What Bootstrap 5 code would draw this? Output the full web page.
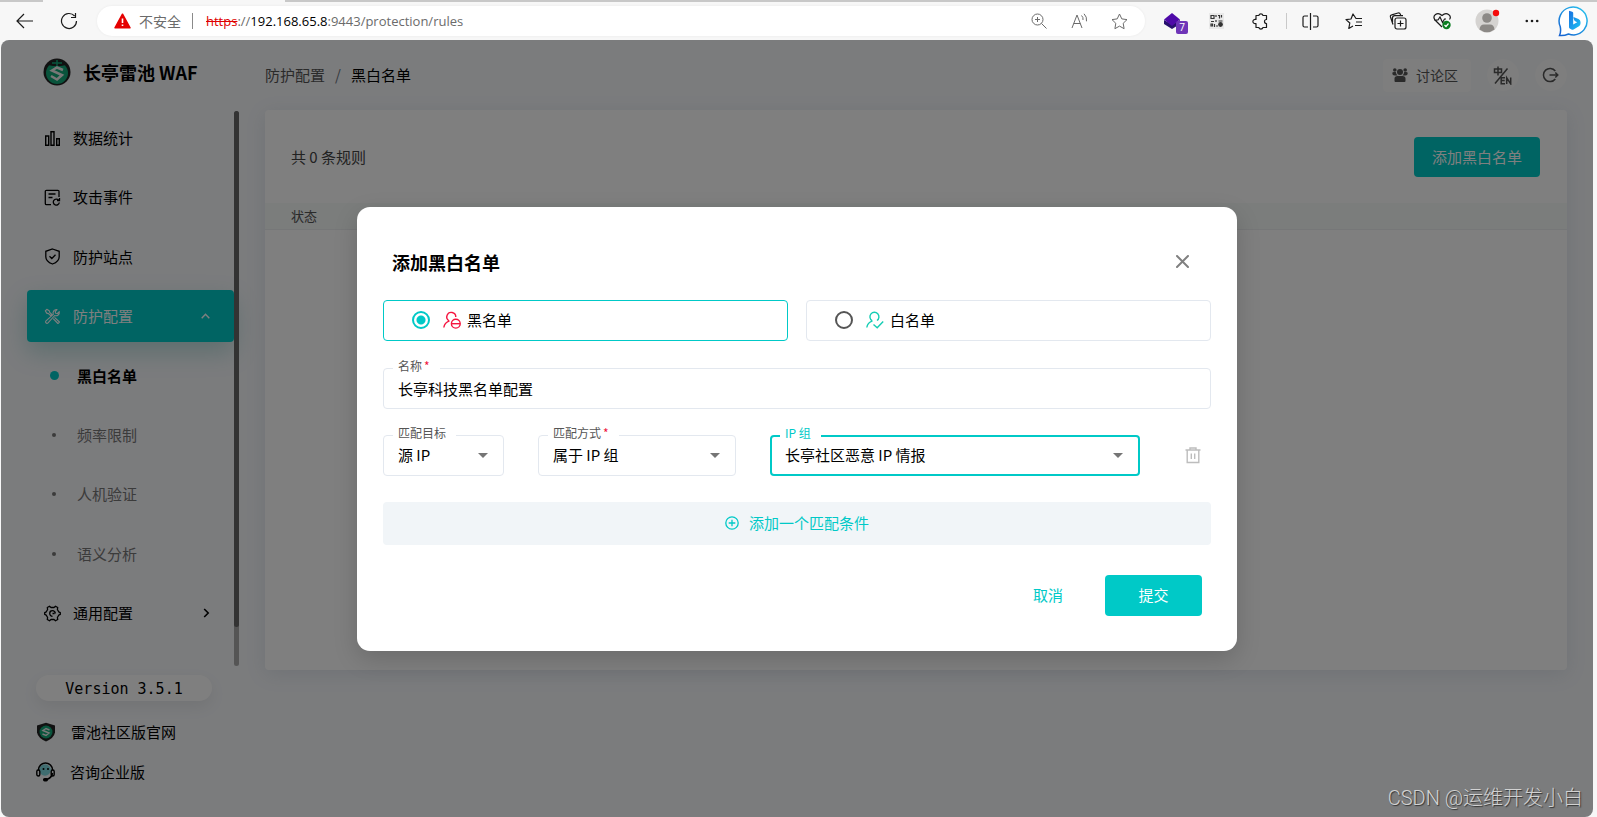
<!DOCTYPE html>
<html lang="zh-CN">
<head>
<meta charset="utf-8">
<meta name="viewport" content="width=device-width, initial-scale=1">
<title>长亭雷池 WAF</title>
<link href="https://cdn.jsdelivr.net/npm/bootstrap@5.3.0/dist/css/bootstrap.min.css" rel="stylesheet">
<style>
  :root { --teal: #00c9c7; --line: #e3e8ef; }
  body { font-family: "Noto Sans CJK SC", sans-serif; font-size: 15px; line-height: 24px; color: #000; background: #f7f7f7; min-height: 100vh; }
  svg { display: block; flex: none; }
  button { font-family: inherit; }
  .plain { border: 0; background: none; padding: 0; color: inherit; display: flex; align-items: center; justify-content: center; }
  a { color: inherit; text-decoration: none; }

  /* browser toolbar */
  .tabstrip { height: 2px; background: linear-gradient(90deg, #c8c8c8 43px, #f7f7f7 43px 285px, #c8c8c8 285px); }
  .toolbar { height: 38px; padding: 0 1px 0 3px; color: #1b1b1b; }
  .toolbar .plain { width: 44px; height: 30px; position: relative; }
  .address { height: 30px; border-radius: 15px; background: #fff; margin: 0 7px 0 6px; padding: 0 6px 0 17px; font-size: 14px; color: #6b6b6b; box-shadow: 0 0 3px rgba(0,0,0,.06); }
  .address .plain { width: 40px; color: #6b6b6b; }
  .url { font-family: "Open Sans", "Noto Sans CJK SC", sans-serif; font-size: 13px; outline: 0; }
  .url s { color: #e00000; }
  .url b { font-weight: 400; color: #000; }
  .bar-sep { width: 1px; height: 16px; background: #8a8a8a; }
  .address .bar-sep { margin: 0 13px 0 11px; }
  .group-sep { width: 4px; }
  .group-sep .bar-sep { background: #c9c9c9; margin: 0 auto; }
  .ext-count { position: absolute; left: 24px; top: 15px; width: 12px; height: 13px; border-radius: 2px; background: #6f35b8; color: #fff; font: 10px/13px "Open Sans", sans-serif; }

  /* page frame */
  .frame { position: relative; margin: 0 4px 0 1px; border-radius: 8px; overflow: hidden; background: #f6f8fb; }
  .side { width: 238px; padding-left: 26px; flex: none; }
  .brand { height: 71px; padding: 0 0 8px 16px; gap: 12px; font-size: 18px; font-weight: 700; }
  .menu { width: 207px; padding: 1px 0 27px; }
  .menu a { height: 52px; padding: 0 24px 0 17px; border-radius: 4px; gap: 12px; }
  .menu a.active { background: var(--teal); color: #fff; box-shadow: 0 10px 25px rgba(0,140,130,.25); }
  .menu a.sub { color: #777; gap: 13px; }
  .menu a.sub i { width: 20px; display: flex; justify-content: center; }
  .menu a.sub i::before { content: ""; width: 4px; height: 4px; border-radius: 50%; background: #777; }
  .menu a.sub.current { color: #000; font-weight: 700; }
  .menu a.sub.current i::before { width: 9px; height: 9px; background: var(--teal); }
  .track { width: 5px; border-radius: 3px; background: #aaa; }
  .track div { height: 93%; border-radius: 3px; background: #666; }
  .side-foot { padding: 9px 0 25px 9px; }
  .version { width: 176px; height: 26px; border-radius: 13px; background: #fff; margin-bottom: 11px; font: 15px/28px "DejaVu Sans Mono", monospace; text-align: center; box-shadow: 0 6px 16px rgba(0,0,0,.07); }
  .side-foot a { height: 40px; gap: 15px; }

  .content { padding: 0 26px; min-width: 0; }
  .topbar { height: 70px; }
  .crumbs { gap: 10px; color: #555; margin: 0; }
  .forum.plain, .round.plain { background: #fcfcfc; color: #555; }
  .forum.plain { height: 33px; width: 88px; border-radius: 4px; gap: 8px; font-size: 14px; padding-right: 4px; }
  .round.plain { width: 32px; height: 32px; border-radius: 50%; padding-right: 2px; }
  .panel { background: #fff; border-radius: 4px; height: calc(100vh - 257px); min-height: 500px; box-shadow: 0 4px 20px rgba(80,100,130,.13); }
  .panel-head { height: 93px; padding: 0 27px 0 26px; color: #444; }
  .btn-teal { background: var(--teal); color: #fff; border-radius: 4px; border: 0; font-size: 15px; line-height: 24px; padding: 8px 18px; }
  .btn-teal:hover { background: #00b5b3; color: #fff; }
  .rules { width: 100%; font-size: 13px; line-height: 20px; }
  .rules th { height: 26px; padding: 0 26px; background: #f6faf8; color: #555; font-weight: 400; border-bottom: 1px solid #eceff1; }

  /* dialog */
  .shade { position: absolute; inset: 0; background: rgba(0,0,0,.5); }
  .dialog { width: 880px; border-radius: 13px; background: #fff; padding: 33px 26px 35px; box-shadow: 0 8px 24px rgba(0,0,0,.16); }
  .dialog-head { height: 44px; padding: 0 22px 0 9px; margin-bottom: 16px; }
  .dialog-head h2 { font-size: 18px; line-height: 28px; font-weight: 700; margin: 0; }
  .choice { flex: 1; height: 41px; border: 1px solid var(--line); border-radius: 4px; padding-left: 28px; }
  .choice.on { border-color: var(--teal); }
  .choice input { appearance: none; width: 18px; height: 18px; margin: 0 13px 0 0; border: 2px solid #555; border-radius: 50%; }
  .choice input:checked { border-color: var(--teal); background: radial-gradient(circle, var(--teal) 4px, #fff 5px); }
  .choice svg { margin-right: 6px; }
  .field { position: relative; }
  .field label { position: absolute; left: 10px; top: -10px; padding: 0 10px 0 5px; background: #fff; font-size: 12px; line-height: 16px; color: #555; white-space: nowrap; }
  .field label span { color: #f0143c; padding-left: 2px; }
  .field input, .field select { width: 100%; height: 41px; border: 1px solid var(--line); border-radius: 4px; padding: 0 14px; background-color: #fff; color: #000; outline: 0; font: inherit; }
  .field select { appearance: none; background-image: url("data:image/svg+xml,%3Csvg xmlns='http://www.w3.org/2000/svg' width='10' height='5'%3E%3Cpath d='M0 0h10L5 5z' fill='%23757575'/%3E%3C/svg%3E"); background-repeat: no-repeat; background-position: right 15px center; }
  .field.focus select { border: 2px solid var(--teal); padding: 0 13px; }
  .field.focus label { color: var(--teal); }
  .w-target { width: 121px; } .w-method { width: 198px; } .w-group { width: 370px; }
  .gap-row { column-gap: 34px; }
  .add { width: 100%; height: 43px; border-radius: 4px; gap: 10px; }
  .add.plain { background: #f1f5f8; color: var(--teal); }
  .cancel.plain { color: var(--teal); padding: 0 4px; }
  .submit { width: 97px; height: 41px; }
  .actions { gap: 38px; padding-right: 9px; }
  .mt-a { margin-top: 27px; } .mt-b { margin-top: 26px; } .mt-c { margin-top: 30px; }
  .mark-text { position: absolute; right: 10px; bottom: 4px; font: 300 20px/30px "Liberation Sans Narrow", Roboto, "Noto Sans CJK SC", sans-serif; color: #d2d2d2; text-shadow: 1px 1px 1px #333; }
</style>
</head>
<body class="d-flex flex-column">

<div class="tabstrip"></div>
<header class="toolbar d-flex align-items-center">
  <button class="plain" aria-label="后退"><svg width="18" height="16" viewBox="0 0 18 16" fill="none" stroke="currentColor" stroke-width="1.200"><path d="M17 8H1M8 1 1 8l7 7"/></svg></button>
  <button class="plain" aria-label="刷新"><svg width="18" height="18" viewBox="0 0 18 18" fill="none" stroke="currentColor" stroke-width="1.200"><path d="M16.500 9A7.500 7.500 0 1 1 14.600 4M15.500 1v4.500H11"/></svg></button>
  <div class="address flex-fill d-flex align-items-center">
    <svg width="17" height="16" viewBox="0 0 17 16"><path d="M8.500 1.200 16 14.800H1z" fill="#e50000" stroke="#e50000" stroke-width="1.500" stroke-linejoin="round"/><path d="M8.500 5.500v4.500M8.500 11.500v1.500" stroke="#fff" stroke-width="1.600"/></svg>
    <span class="ps-2">不安全</span>
    <span class="bar-sep"></span>
    <div class="url flex-fill" role="textbox" aria-label="地址"><s>https</s>://<b>192.168.65.8</b>:9443/protection/rules</div>
    <button class="plain" aria-label="缩放"><svg width="16" height="16" viewBox="0 0 16 16" fill="none" stroke="currentColor"><circle cx="6.500" cy="6.500" r="5.500"/><path d="m10.500 10.500 5 5M6.500 4v5M4 6.500h5"/></svg></button>
    <button class="plain" aria-label="朗读"><svg width="17" height="16" viewBox="0 0 17 16" fill="none" stroke="currentColor"><path d="M1 15 6 2l5 13M2.700 10.500h6.600M10.500 2.500q2 1.800 1.500 4.500M13 .8q3.200 3 2.500 7.500"/></svg></button>
    <button class="plain" aria-label="收藏"><svg width="17" height="17" viewBox="0 0 17 17" fill="none" stroke="currentColor" stroke-linejoin="round"><path d="m8.500 1 2.300 4.900 5.200.7-3.800 3.700.9 5.400-4.600-2.600-4.600 2.600.9-5.400L1 6.600l5.200-.7z"/></svg></button>
  </div>
  <button class="plain pe-1" aria-label="扩展 7"><svg width="18" height="18" viewBox="0 0 18 18"><path d="m1 8 8 4.500L17 8v4l-8 5-8-5z" fill="#27106e"/><path d="m9 1 8 6.500L9 14 1 7.500z" fill="#4e0aa8"/></svg><span class="ext-count">7</span></button>
  <button class="plain pe-1" aria-label="二维码"><svg width="15" height="16" viewBox="0 0 15 16"><path fill="#e9e9e9" d="M0 0h15v16H0z"/><path d="M2 2.500h3v3H2zM9 2.500h1.500v3M12.500 2v2.500M7 2v2M2 8.500h3M7 7v2M9.500 8h4M2 11h1.500v2H2zM5.500 11v3M7 13h2" fill="none" stroke="#333" stroke-width="1.200"/><circle cx="11.500" cy="11.500" r="2.400" fill="#333"/></svg></button>
  <button class="plain pe-1" aria-label="扩展"><svg width="17" height="17" viewBox="0 0 17 17" fill="none" stroke="currentColor" stroke-width="1.200" stroke-linejoin="round"><path d="M4 2.500h2.800a2.200 2.200 0 0 1 4.200 0h3.500V6.500a2 2 0 1 0 0 4V14.500H11a2.200 2.200 0 0 1-4.200 0H4v-4a2.200 2.200 0 1 1 0-4z"/></svg></button>
  <div class="group-sep"><div class="bar-sep"></div></div>
  <button class="plain" aria-label="分屏"><svg width="17" height="17" viewBox="0 0 17 17" fill="none" stroke="currentColor" stroke-width="1.200"><path d="M8.500 0v17M6 3H2.500Q1 3 1 4.500v8Q1 14 2.500 14H6M11 3h3.500Q16 3 16 4.500v8q0 1.500-1.500 1.500H11"/></svg></button>
  <button class="plain" aria-label="收藏夹"><svg width="18" height="17" viewBox="0 0 18 17" fill="none" stroke="currentColor" stroke-width="1.200" stroke-linejoin="round"><path d="M17 5.500h-6L8 1 6 6l-5 .6L4.800 10l-1 5.500L8 13M11 9h6M10 12.500h7"/></svg></button>
  <button class="plain" aria-label="集锦"><svg width="18" height="18" viewBox="0 0 18 18" fill="none" stroke="currentColor" stroke-width="1.200"><rect x="6" y="6" width="11" height="11" rx="2"/><path d="M11.500 8.500v6M8.500 11.500h6M4 12.500 1.500 5q-.5-1.800 1.200-2.200L9 1q1.800-.4 2.400 1.400l.4 1.300M3.500 10V6q0-2.300 2.300-2.300H14"/></svg></button>
  <button class="plain" aria-label="浏览器健康"><svg width="19" height="18" viewBox="0 0 19 18" fill="none" stroke="currentColor" stroke-width="1.200"><path d="m9 15-7-7C-1 4 4-1 9 3.500 14-1 19 4 16.500 7.500M1 8h4l2-3 2.500 5.500L11.500 7H13"/><circle cx="13.500" cy="13" r="4.200" fill="#0a7d20" stroke="none"/><path d="m11.500 13 1.500 1.500 2.500-3" stroke="#fff"/></svg></button>
  <button class="plain ps-1" aria-label="个人资料"><svg width="26" height="26" viewBox="0 0 26 26"><circle cx="12" cy="13" r="11.500" fill="#d5d3d1"/><circle cx="12" cy="10" r="4.800" fill="#8c8986"/><path d="M4.500 21.500Q5 16.500 9 16.500h6q4 0 4.500 5Q12 27 4.500 21.500z" fill="#8c8986"/><circle cx="21" cy="5" r="3.200" fill="#f50a0a"/></svg></button>
  <button class="plain ps-1" aria-label="更多"><svg width="14" height="4" viewBox="0 0 14 4" fill="currentColor"><circle cx="1.800" cy="2" r="1.300"/><circle cx="7" cy="2" r="1.300"/><circle cx="12.200" cy="2" r="1.300"/></svg></button>
  <button class="plain" aria-label="Bing"><svg width="32" height="32" viewBox="0 0 32 32"><defs><linearGradient id="ring" x1="1" y1="0" x2="0" y2="1"><stop offset="0" stop-color="#29c7f0"/><stop offset="1" stop-color="#1560d0"/></linearGradient><linearGradient id="bee" x1="0" y1="0" x2="1" y2="1"><stop offset="0" stop-color="#1b6fe0"/><stop offset="1" stop-color="#18c4f4"/></linearGradient></defs><path d="M1.500 30.500q1.800-4 .7-9A14 14 0 1 1 16 30q-3 0-5.500-1-4.500 2-9 1.500z" fill="#fff" stroke="url(#ring)" stroke-width="1.500"/><path d="M11 6.500q0-.8.8-.6l2.400.8q1 .3 1 1.300v11.500l4-2.200-2-1q-.8-.4-1-1.200l-.8-2.300q-.2-.9.7-.6l4.400 1.700q2 .9 2 3v1.600q0 1.800-1.500 2.700l-5.500 3.200q-1 .5-2 0l-1.700-1q-.8-.5-.8-1.500z" fill="url(#bee)"/></svg></button>
</header>

<div class="frame flex-fill d-flex">
  <aside class="side d-flex flex-column">
    <div class="brand d-flex align-items-center">
      <svg width="28" height="28" viewBox="0 0 28 28"><circle cx="14" cy="14" r="13.500" fill="#222"/><circle cx="14" cy="15" r="11" fill="#12a878"/><path d="M5 7Q14-1 23 7l-5 1h-8z" fill="#222"/><path d="M9 5h10M14 2v6" stroke="#12a878" stroke-width="1.500"/><path d="m20 12-6-2.500-5 3L19 17l-5 4.500L8 18" fill="none" stroke="#eee" stroke-width="2.500"/></svg>
      <span>长亭雷池 WAF</span>
    </div>
    <div class="flex-fill d-flex">
      <nav class="menu d-flex flex-column justify-content-between">
        <a href="#" class="d-flex align-items-center"><svg width="17" height="17" viewBox="0 0 17 17" fill="none" stroke="currentColor" stroke-width="1.400"><path d="M1.700 6h3v9.300h-3zM7 1.700h3v13.600H7zM12.700 8.700h2.600v6.600h-2.600z"/></svg>数据统计</a>
        <a href="#" class="d-flex align-items-center"><svg width="17" height="17" viewBox="0 0 17 17" fill="none" stroke="currentColor" stroke-width="1.300"><path d="M15 8V2.500Q15 1.300 13.800 1.300H2.500Q1.300 1.300 1.300 2.500v12q0 1.200 1.200 1.200H7M4.500 5h7M4.500 8.500h4M14.500 11a3 3 0 1 0 .8 2.500M15.500 9v2.500H13"/></svg>攻击事件</a>
        <a href="#" class="d-flex align-items-center"><svg width="17" height="17" viewBox="0 0 17 17" fill="none" stroke="currentColor" stroke-width="1.300"><path d="m8.500 1 6.700 2.300v5.400q0 4.800-6.700 7.300-6.700-2.500-6.700-7.300V3.300zM5.500 8.300l2.300 2.200 3.700-3.800"/></svg>防护站点</a>
        <a href="#" class="d-flex align-items-center active"><svg width="17" height="17" viewBox="0 0 17 17" fill="none" stroke="currentColor" stroke-width="1.100" stroke-linejoin="round"><path d="M1.300 2.800 2.800 1.300l2.400 1.400.5 1.700 2.100 2.100-1.200 1.200-2.100-2.100-1.800-.5zM10.500 9.300l4.900 4.700-1.500 1.500-4.700-4.900M15.300 3.700a3.400 3.400 0 0 1-4.600 3.800L4 14.900a1.400 1.400 0 0 1-2-2L9.300 6.300A3.400 3.400 0 0 1 13 1.600L11.200 3.500l.4 1.700 1.800.3z"/></svg><span class="flex-fill">防护配置</span><svg width="9" height="6" viewBox="0 0 9 6" fill="none" stroke="currentColor" stroke-width="1.400"><path d="m.7 5.200 3.800-4 3.800 4"/></svg></a>
        <a href="#" class="d-flex align-items-center sub current"><i></i>黑白名单</a>
        <a href="#" class="d-flex align-items-center sub"><i></i>频率限制</a>
        <a href="#" class="d-flex align-items-center sub"><i></i>人机验证</a>
        <a href="#" class="d-flex align-items-center sub"><i></i>语义分析</a>
        <a href="#" class="d-flex align-items-center"><svg width="17" height="17" viewBox="0 0 17 17" fill="none" stroke="currentColor" stroke-width="1.300" stroke-linejoin="round"><path d="m5.500 1.200 1.500 1.300h3l1.500-1.300 2.200 1.300-.3 2 1.300 2.300 1.600.8v1.800l-1.600.8-1.300 2.300.3 2-2.200 1.300L10 14.500H7l-1.500 1.300-2.200-1.300.3-2-1.300-2.300-1.600-.8V7.600l1.600-.8 1.300-2.300-.3-2z"/><path d="M11.300 8.500A2.800 2.800 0 1 0 8.500 11.300M8.500 8.500h2"/></svg><span class="flex-fill">通用配置</span><svg width="7" height="10" viewBox="0 0 7 10" fill="none" stroke="currentColor" stroke-width="1.600"><path d="m1.200 1 4 4-4 4"/></svg></a>
      </nav>
      <div class="track"><div></div></div>
    </div>
    <div class="side-foot">
      <div class="version">Version 3.5.1</div>
      <a href="#" class="d-flex align-items-center"><svg width="20" height="20" viewBox="0 0 20 20"><path d="m10 .8 9 2.700v7Q18 16 10 19.500 2 16 1 10.500v-7z" fill="#222"/><circle cx="10" cy="10" r="6.500" fill="#12a878"/><path d="M13.500 8 10 6.500 7 8.500l6 2.500-3 2.500L6.500 12" fill="none" stroke="#eee" stroke-width="1.500"/></svg>雷池社区版官网</a>
      <a href="#" class="d-flex align-items-center"><svg width="19" height="20" viewBox="0 0 19 20"><circle cx="9" cy="8" r="5.800" fill="#7fdbe0"/><path d="M2.500 8a7 7 0 0 1 14 0M16.500 11q-1 5.500-6.500 6.500" fill="none" stroke="#000" stroke-width="1.600"/><rect x=".8" y="8" width="3" height="6" rx="1.500" fill="none" stroke="#000" stroke-width="1.400"/><rect x="15.200" y="8" width="3" height="6" rx="1.500" fill="none" stroke="#000" stroke-width="1.400"/><rect x="7" y="16" width="5" height="3.400" rx="1.600"/><circle cx="7.500" cy="7" r="1"/><circle cx="12" cy="7" r="1"/></svg>咨询企业版</a>
    </div>
  </aside>

  <main class="content flex-fill">
    <div class="topbar d-flex align-items-center">
      <nav class="crumbs d-flex flex-fill"><a href="#">防护配置</a><span class="text-secondary">/</span><span class="text-black">黑白名单</span></nav>
      <button class="plain forum"><svg width="16" height="16" viewBox="0 0 16 16" fill="currentColor"><circle cx="2.800" cy="3" r="1.800"/><circle cx="13.200" cy="3" r="1.800"/><circle cx="8" cy="5" r="3"/><path d="M.3 6Q.3 5 2 5h1.800q.3 2 1.700 3.500H2.800Q.3 8.500.3 6zM15.700 6q0-1-1.700-1h-1.800q-.3 2-1.700 3.500h2.700Q15.700 8.500 15.700 6zM2.500 11.500q0-2.500 3-2.500h5q3 0 3 2.500V14q0 1-1 1h-9q-1 0-1-1z"/></svg>讨论区</button>
      <button class="plain round ms-3" aria-label="切换语言"><svg width="19" height="19" viewBox="0 0 19 19" fill="none" stroke="currentColor" stroke-width="1.500"><path d="M1.500 3h7v3.500h-7zM5 .5v9M14.500 2.500 2 17.500M12 11.700H8.200v6H12M8.200 14.600h3.500M13.700 18v-6.200l4 6V11.500"/></svg></button>
      <button class="plain round ms-3" aria-label="退出"><svg width="17" height="16" viewBox="0 0 17 16" fill="none" stroke="currentColor" stroke-width="1.500"><path d="M13.300 4A6.600 6.600 0 1 0 13.300 12M7.500 8H16M13.300 5.500 15.800 8l-2.500 2.500"/></svg></button>
    </div>
    <section class="panel">
      <div class="panel-head d-flex align-items-center justify-content-between">
        <span>共 0 条规则</span>
        <button class="btn btn-teal">添加黑白名单</button>
      </div>
      <table class="rules"><thead><tr><th scope="col">状态</th></tr></thead></table>
    </section>
  </main>

  <div class="shade d-flex align-items-center justify-content-center">
    <form class="dialog" role="dialog" aria-labelledby="dlg-title">
      <div class="dialog-head d-flex align-items-center justify-content-between">
        <h2 id="dlg-title">添加黑白名单</h2>
        <button type="button" class="plain" aria-label="关闭"><svg width="13" height="13" viewBox="0 0 13 13" stroke="#808080" stroke-width="2" stroke-linecap="round"><path d="m1 1 11 11M12 1 1 12"/></svg></button>
      </div>
      <div class="d-flex" style="gap:18px">
        <label class="choice on d-flex align-items-center"><input type="radio" name="kind" checked><svg width="18" height="18" viewBox="0 0 18 18" fill="none" stroke="#f5143f" stroke-width="1.400"><path d="M6 9.800A4.500 4.500 0 1 1 12.800 6M.8 16.500Q1.500 11.500 6.500 9.800"/><circle cx="12.800" cy="12.700" r="4.400"/><path d="M8.500 12.700h8.600"/></svg>黑名单</label>
        <label class="choice d-flex align-items-center"><input type="radio" name="kind"><svg width="18" height="18" viewBox="0 0 18 18" fill="none" stroke="#14cdb4" stroke-width="1.400"><path d="M6 9.600A4.500 4.500 0 1 1 11 9.500M.8 16.500Q1.500 11.500 6.500 9.800M7.500 13.500l3.700 3.300 6-6.300"/></svg>白名单</label>
      </div>
      <div class="field mt-a"><label for="rule-name">名称<span>*</span></label><input id="rule-name" type="text" value="长亭科技黑名单配置"></div>
      <div class="d-flex align-items-center gap-row mt-b">
        <div class="field w-target"><label for="target">匹配目标</label><select id="target"><option>源 IP</option></select></div>
        <div class="field w-method"><label for="method">匹配方式<span>*</span></label><select id="method"><option>属于 IP 组</option></select></div>
        <div class="field w-group focus"><label for="group">IP 组</label><select id="group"><option>长亭社区恶意 IP 情报</option></select></div>
        <button type="button" class="plain flex-fill" aria-label="删除"><svg width="16" height="17" viewBox="0 0 16 17" fill="none" stroke="#bdbdbd" stroke-width="1.400"><path d="M.5 3h15M5 2.500V1h6v1.500M2.200 3v12.500h11.600V3M6.300 6.500v5.500M9.700 6.500v5.500"/></svg></button>
      </div>
      <button type="button" class="plain add mt-b"><svg width="14" height="14" viewBox="0 0 14 14" fill="none" stroke="currentColor" stroke-width="1.300"><circle cx="7" cy="7" r="6.200"/><path d="M7 3.700v6.600M3.700 7h6.600"/></svg>添加一个匹配条件</button>
      <div class="d-flex justify-content-end mt-c actions">
        <button type="button" class="plain cancel">取消</button>
        <button type="submit" class="btn btn-teal submit">提交</button>
      </div>
    </form>
  </div>
  <div class="mark-text">CSDN @运维开发小白</div>
</div>

<script src="https://cdn.jsdelivr.net/npm/bootstrap@5.3.0/dist/js/bootstrap.bundle.min.js"></script>
</body>
</html>
